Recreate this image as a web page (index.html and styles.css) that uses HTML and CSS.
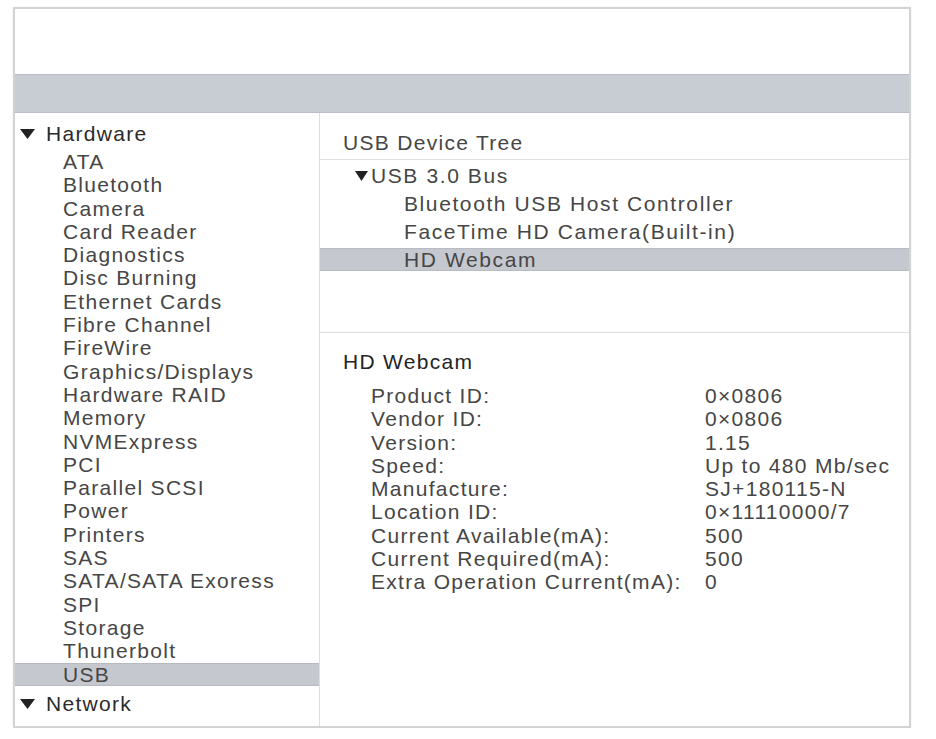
FILE: index.html
```html
<!DOCTYPE html>
<html>
<head>
<meta charset="utf-8">
<title>System Information</title>
<link rel="stylesheet" href="styles.css">
</head>
<body>
<div class="window">
  <div class="toolbar"></div>
  <div class="tabbar"></div>
  <div class="content">
    <aside class="sidebar">
      <div class="group-head">
        <svg class="tri" width="15" height="10" viewBox="0 0 15 10"><polygon points="0,0 15,0 7.5,10" fill="#222"/></svg>
        <span>Hardware</span>
      </div>
      <ul class="items">
        <li>ATA</li>
        <li>Bluetooth</li>
        <li>Camera</li>
        <li>Card Reader</li>
        <li>Diagnostics</li>
        <li>Disc Burning</li>
        <li>Ethernet Cards</li>
        <li>Fibre Channel</li>
        <li>FireWire</li>
        <li>Graphics/Displays</li>
        <li>Hardware RAID</li>
        <li>Memory</li>
        <li>NVMExpress</li>
        <li>PCI</li>
        <li>Parallel SCSI</li>
        <li>Power</li>
        <li>Printers</li>
        <li>SAS</li>
        <li>SATA/SATA Exoress</li>
        <li>SPI</li>
        <li>Storage</li>
        <li>Thunerbolt</li>
        <li class="selected">USB</li>
      </ul>
      <div class="group-head network">
        <svg class="tri" width="15" height="10" viewBox="0 0 15 10"><polygon points="0,0 15,0 7.5,10" fill="#222"/></svg>
        <span>Network</span>
      </div>
    </aside>
    <main class="main">
      <div class="tree-head">USB Device Tree</div>
      <div class="tree">
        <div class="tree-row bus">
          <svg class="tri-small" width="13" height="10" viewBox="0 0 13 10"><polygon points="0,0 13,0 6.5,10" fill="#222"/></svg>
          <span>USB 3.0 Bus</span>
        </div>
        <div class="tree-row device">Bluetooth USB Host Controller</div>
        <div class="tree-row device">FaceTime HD Camera(Built-in)</div>
        <div class="tree-row device selected">HD Webcam</div>
      </div>
      <div class="details">
        <div class="details-title">HD Webcam</div>
        <div class="props">
          <div class="label">Product ID:</div><div class="value">0×0806</div>
          <div class="label">Vendor ID:</div><div class="value">0×0806</div>
          <div class="label">Version:</div><div class="value">1.15</div>
          <div class="label">Speed:</div><div class="value">Up to 480 Mb/sec</div>
          <div class="label">Manufacture:</div><div class="value">SJ+180115-N</div>
          <div class="label">Location ID:</div><div class="value">0×11110000/7</div>
          <div class="label">Current Available(mA):</div><div class="value">500</div>
          <div class="label">Current Required(mA):</div><div class="value">500</div>
          <div class="label">Extra Operation Current(mA):</div><div class="value">0</div>
        </div>
      </div>
    </main>
  </div>
</div>
</body>
</html>
```
FILE: styles.css
```css
* { box-sizing: border-box; }

html, body {
  margin: 0;
  padding: 0;
  background: #ffffff;
}

body {
  font-family: "Liberation Sans", Arial, Helvetica, sans-serif;
  font-size: 21px;
  letter-spacing: 1.3px;
  color: #464646;
}

.window {
  margin: 7px 0 0 13px;
  width: 898px;
  height: 721px;
  border: 2px solid #d3d3d3;
  box-shadow: 0 0 2px rgba(0,0,0,0.08);
  display: flex;
  flex-direction: column;
  background: #fff;
}

.toolbar {
  height: 65px;
  flex: none;
}

.tabbar {
  height: 39px;
  flex: none;
  background: #c8ccd3;
  border-top: 1px solid #b9bdc5;
  border-bottom: 1px solid #b9bdc5;
}

.content {
  flex: 1;
  display: flex;
  min-height: 0;
}

.sidebar {
  width: 305px;
  flex: none;
  border-right: 1px solid #dedede;
  padding-top: 7px;
}

.group-head {
  height: 28px;
  line-height: 28px;
  display: flex;
  align-items: center;
  padding-left: 5px;
  color: #2b2b2b;
}

.group-head .tri {
  margin-right: 11px;
  flex: none;
}

.group-head.network {
  margin-top: 4px;
}

.items {
  list-style: none;
  margin: 2px 0 0 0;
  padding: 0;
}

.items li {
  height: 23.3px;
  line-height: 23.3px;
  padding-left: 48px;
  white-space: nowrap;
}

.items li.selected {
  background: #c5c8ce;
  border-top: 1px solid #b6b9c0;
  border-bottom: 1px solid #b6b9c0;
  line-height: 21px;
}

.main {
  flex: 1;
  display: flex;
  flex-direction: column;
  min-width: 0;
}

.tree-head {
  height: 47px;
  padding: 18px 0 0 23px;
  line-height: 23px;
  border-bottom: 1px solid #e0e0e0;
  flex: none;
}

.tree {
  height: 173px;
  flex: none;
  border-bottom: 1px solid #dcdcdc;
  padding-top: 4px;
  display: flex;
  flex-direction: column;
  gap: 5px;
}

.tree-row {
  height: 23px;
  line-height: 23px;
  white-space: nowrap;
  letter-spacing: 1.6px;
}

.tree-row.bus {
  display: flex;
  align-items: center;
  padding-left: 35px;
}

.tri-small {
  margin-right: 3px;
  flex: none;
}

.tree-row.device {
  padding-left: 84px;
}

.tree-row.selected {
  background: #c5c8ce;
  border-top: 1px solid #b8bbc2;
  border-bottom: 1px solid #b8bbc2;
  line-height: 21px;
}

.details {
  padding: 17px 0 0 23px;
}

.details-title {
  line-height: 23px;
  color: #242424;
}

.props {
  margin-top: 11px;
  padding-left: 28px;
  display: grid;
  grid-template-columns: 334px auto;
  grid-auto-rows: 23.25px;
  line-height: 23.25px;
}

.props div {
  white-space: nowrap;
}
```
